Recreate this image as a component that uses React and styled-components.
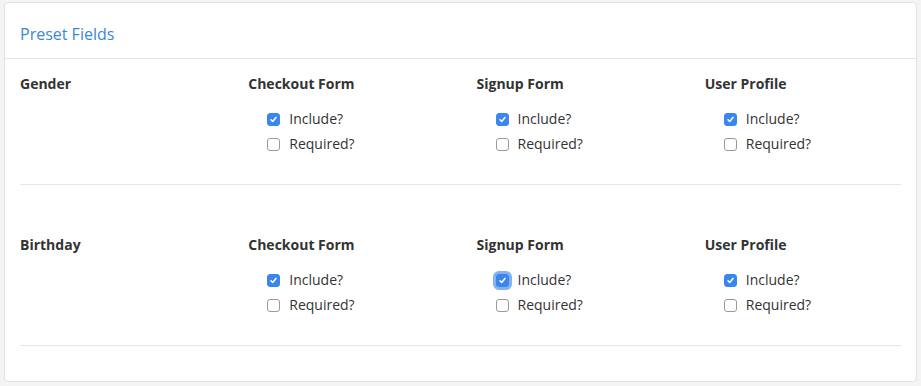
import React from "react";
import styled, { createGlobalStyle } from "styled-components";

const GlobalStyle = createGlobalStyle`
  html, body {
    margin: 0;
    padding: 0;
    background: #f4f4f4;
  }
  body {
    font-family: "Open Sans", "Liberation Sans", sans-serif;
    font-size: 14px;
    color: #333;
  }
`;

const Page = styled.div`
  padding: 2px 4px 4px 4px;
`;

const Card = styled.section`
  background: #fff;
  border: 1px solid #e2e2e2;
  border-radius: 4px;
  padding-bottom: 35px;
`;

const CardHeader = styled.header`
  height: 55px;
  padding: 0 15px;
  display: flex;
  align-items: center;
  border-bottom: 1px solid #e3e3e3;
`;

const Title = styled.h3`
  margin: 6px 0 0;
  font-size: 16px;
  font-weight: 400;
  color: #3d87d5;
`;

const CardBody = styled.div`
  padding: 0 15px;
`;

const FieldRow = styled.div`
  display: grid;
  grid-template-columns: repeat(4, 1fr);
  column-gap: 32px;
  padding: 15px 0 30px;
  border-bottom: 1px solid #e6e6e6;

  & + & {
    margin-top: 35px;
  }
`;

const Heading = styled.div`
  font-weight: 700;
  line-height: 20px;
`;

const Column = styled.div`
  display: flex;
  flex-direction: column;
`;

const Options = styled.div`
  display: flex;
  flex-direction: column;
  gap: 5px;
  padding: 15px 0 0 20px;
`;

const Option = styled.label`
  display: flex;
  align-items: center;
  gap: 9px;
  line-height: 20px;
`;

const Box = styled.span`
  box-sizing: border-box;
  width: 13px;
  height: 13px;
  margin-left: -1px;
  border-radius: 3px;
  display: inline-flex;
  align-items: center;
  justify-content: center;
  background: ${(p) => (p.$checked ? "#3b86ee" : "#fff")};
  border: 1px solid ${(p) => (p.$checked ? "#3b86ee" : "#9a9a9a")};
  box-shadow: ${(p) =>
    p.$focused ? "0 0 0 3px rgba(92, 150, 238, 0.75)" : "none"};
`;

const Check = () => (
  <svg width="9" height="9" viewBox="0 0 9 9">
    <path
      d="M2 4.8 L3.7 6.4 L7 2.4"
      fill="none"
      stroke="#fff"
      strokeWidth="1.5"
      strokeLinecap="round"
      strokeLinejoin="round"
    />
  </svg>
);

const Checkbox = ({ label, checked, focused }) => (
  <Option>
    <Box $checked={checked} $focused={focused}>
      {checked && <Check />}
    </Box>
    {label}
  </Option>
);

const forms = ["Checkout Form", "Signup Form", "User Profile"];

const fields = [
  { name: "Gender", focus: null },
  { name: "Birthday", focus: "Signup Form" },
];

export default function App() {
  return (
    <Page>
      <GlobalStyle />
      <Card>
        <CardHeader>
          <Title>Preset Fields</Title>
        </CardHeader>
        <CardBody>
          {fields.map((field) => (
            <FieldRow key={field.name}>
              <Heading>{field.name}</Heading>
              {forms.map((form) => (
                <Column key={form}>
                  <Heading>{form}</Heading>
                  <Options>
                    <Checkbox
                      label="Include?"
                      checked
                      focused={field.focus === form}
                    />
                    <Checkbox label="Required?" />
                  </Options>
                </Column>
              ))}
            </FieldRow>
          ))}
        </CardBody>
      </Card>
    </Page>
  );
}
